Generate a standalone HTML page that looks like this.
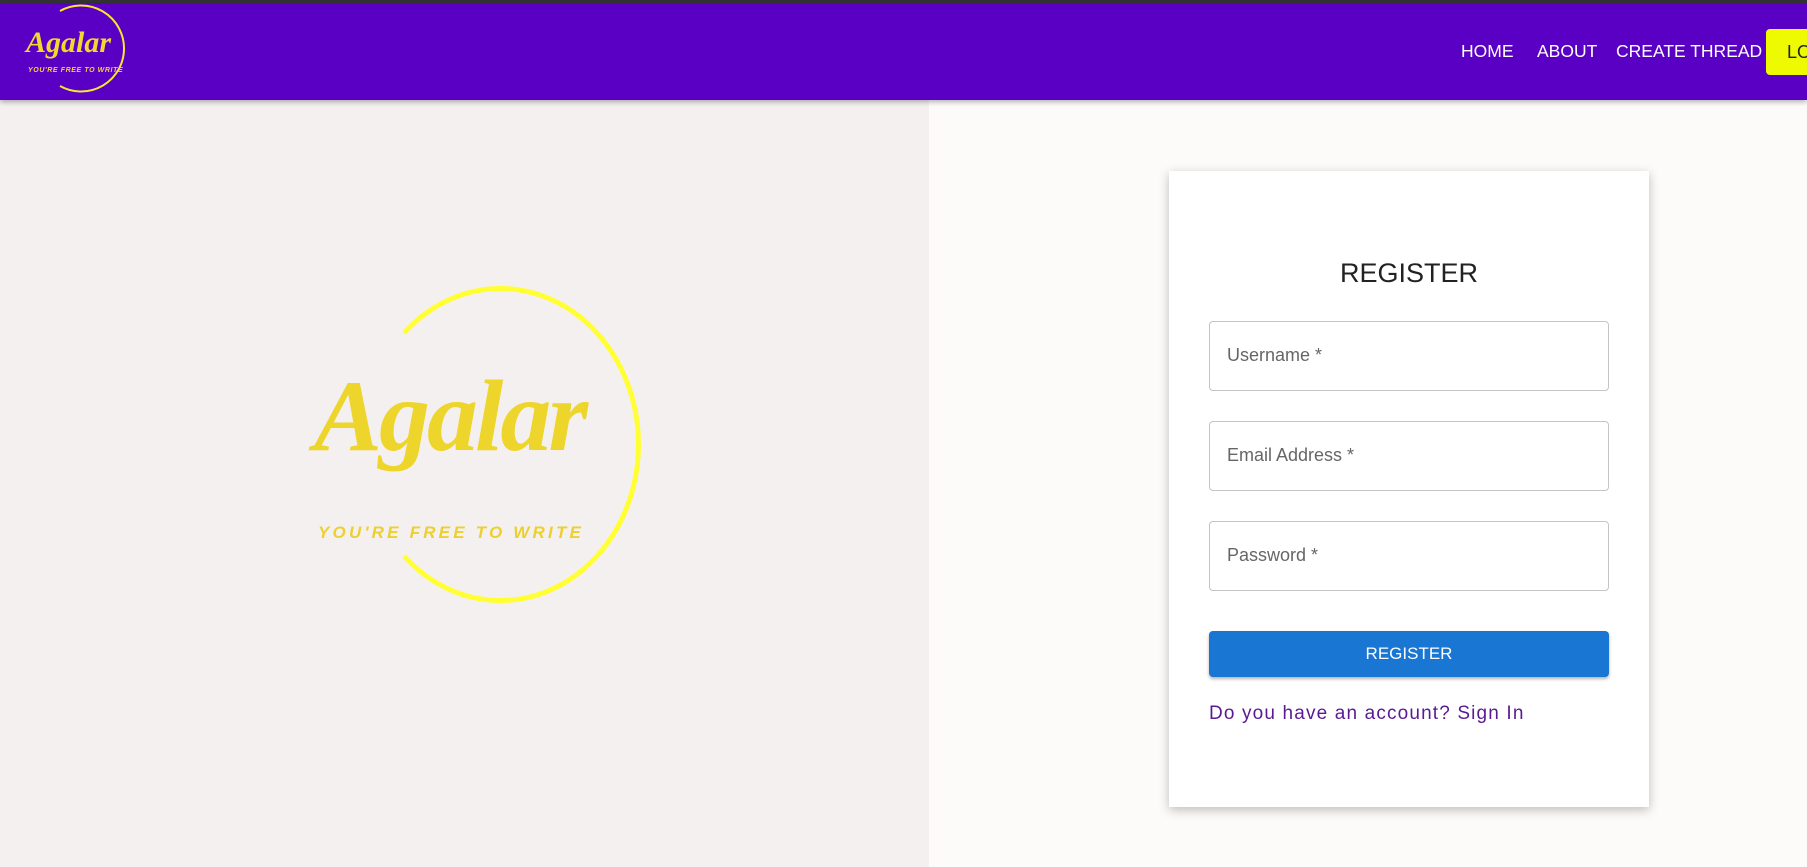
<!DOCTYPE html>
<html><head><meta charset="utf-8">
<style>
*{box-sizing:border-box;margin:0;padding:0}
html,body{width:1807px;height:867px;overflow:hidden;font-family:"Liberation Sans",sans-serif}
.top{position:absolute;left:0;top:0;width:1807px;height:3px;background:#333}
.nav{position:absolute;left:0;top:3px;width:1807px;height:97px;background:#5a00c4;box-shadow:0 2px 5px rgba(0,0,0,.3);z-index:2}
.nav a{position:absolute;top:38px;color:#fff;font-size:17.5px;text-decoration:none}
.login{position:absolute;left:1766px;top:26px;width:60px;height:46px;background:#eefa00;border-radius:4px;color:#222;font-size:18px;padding:13px 0 0 21px}
.left{position:absolute;left:0;top:100px;width:929px;height:767px;background:#f5f0f0}
.right{position:absolute;left:929px;top:100px;width:878px;height:767px;background:#fdfbfa}
.card{position:absolute;left:1169px;top:171px;width:480px;height:636px;background:#fff;box-shadow:0 3px 10px rgba(0,0,0,.25)}
.title{position:absolute;left:0;width:480px;top:87px;text-align:center;font-size:27px;color:#222}
.inp{position:absolute;left:40px;width:400px;height:70px;border:1px solid #c4c4c4;border-radius:4px;font-size:18px;color:#666;padding:23px 0 0 17px}
.btn{position:absolute;left:40px;top:460px;width:400px;height:46px;background:#1976d2;border-radius:4px;color:#fff;font-size:17px;text-align:center;padding-top:13px;box-shadow:0 2px 3px rgba(0,0,0,.3)}
.link{position:absolute;left:40px;top:532px;font-size:19px;color:#5a1a92;letter-spacing:1.15px}
</style></head><body>
<div class="top"></div>
<div class="nav">
<svg style="position:absolute;left:0;top:0" width="140" height="97">
<path d="M60 8 A43 43 0 1 1 60 83" fill="none" stroke="#f4e830" stroke-width="2"/>
<text x="26" y="49" font-family="Liberation Serif,serif" font-style="italic" font-weight="bold" font-size="30" fill="#f0d830">Agalar</text>
<text x="28" y="69" font-family="Liberation Sans,sans-serif" font-weight="bold" font-style="italic" font-size="7" fill="#f0d830" letter-spacing="0.6">YOU'RE FREE TO WRITE</text>
</svg>
<a style="left:1461px">HOME</a>
<a style="left:1537px">ABOUT</a>
<a style="left:1616px">CREATE THREAD</a>
<div class="login">LO</div>
</div>
<div class="left">
<svg style="position:absolute;left:0;top:0" width="929" height="767">
<path d="M404 233 A138 156 0 1 1 404 456" fill="none" stroke="#ffff33" stroke-width="5"/>
<text x="314" y="350" font-family="Liberation Serif,serif" font-style="italic" font-weight="bold" font-size="102" fill="#eed52c" letter-spacing="-3">Agalar</text>
<text x="318" y="438" font-family="Liberation Sans,sans-serif" font-weight="bold" font-style="italic" font-size="17" fill="#ecd030" letter-spacing="3.2">YOU'RE FREE TO WRITE</text>
</svg>
</div>
<div class="right"></div>
<div class="card">
<div class="title">REGISTER</div>
<div class="inp" style="top:150px">Username *</div>
<div class="inp" style="top:250px">Email Address *</div>
<div class="inp" style="top:350px">Password *</div>
<div class="btn">REGISTER</div>
<div class="link">Do you have an account? Sign In</div>
</div>
</body></html>
